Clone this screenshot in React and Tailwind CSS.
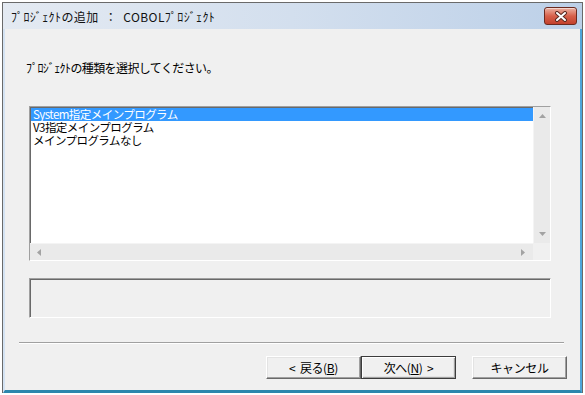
import React from "react";

const font = { fontFamily: '"Noto Sans CJK JP", "Liberation Sans", sans-serif' };

function CloseButton() {
  return (
    <div className="w-[33px] h-[18px] rounded-[3px] border border-[#6b2a20] bg-gradient-to-b from-[#eab0a2] via-[#d7604a] to-[#c3402c] flex items-center justify-center shadow-[inset_0_1px_0_rgba(255,255,255,0.5)]">
      <svg width="14" height="11" viewBox="0 0 14 11">
        <path d="M3 2 L11 9 M11 2 L3 9" stroke="#5a2a22" strokeWidth="4" strokeLinecap="round" />
        <path d="M3 2 L11 9 M11 2 L3 9" stroke="#ffffff" strokeWidth="2" strokeLinecap="round" />
      </svg>
    </div>
  );
}

function Arrow({ dir }) {
  const paths = {
    up: "M0 4 L3.5 0 L7 4 Z",
    down: "M0 0 L7 0 L3.5 4 Z",
    left: "M4 0 L4 7 L0 3.5 Z",
    right: "M0 0 L4 3.5 L0 7 Z",
  };
  const horiz = dir === "left" || dir === "right";
  return (
    <svg width={horiz ? 4 : 7} height={horiz ? 7 : 4} viewBox={horiz ? "0 0 4 7" : "0 0 7 4"}>
      <path d={paths[dir]} fill="#a3a3a3" />
    </svg>
  );
}

function Button({ children, isDefault }) {
  return (
    <div
      className={
        "w-[95px] h-[23px] flex items-center justify-center text-[12px] tracking-[-0.4px] whitespace-pre text-black bg-[#f0f0f0] " +
        (isDefault
          ? "border border-[#3c3c3c] shadow-[inset_1px_1px_0_#ffffff,inset_-1px_-1px_0_#a0a0a0,inset_-2px_-2px_0_#e3e3e3]"
          : "border border-t-white border-l-white border-r-[#696969] border-b-[#696969] shadow-[inset_-1px_-1px_0_#a0a0a0,inset_1px_1px_0_#e3e3e3]")
      }
    >
      {children}
    </div>
  );
}

export default function App() {
  const items = ["System指定メインプログラム", "V3指定メインプログラム", "メインプログラムなし"];

  return (
    <div className="w-[585px] h-[395px] bg-white pl-[2px] pt-[2px]" style={font}>
      <div className="w-[581px] h-[391px] flex flex-col border border-b-0 border-[#6a6a6a]">
        {/* title bar */}
        <div className="h-[26px] flex items-start bg-gradient-to-r from-[#e4eaf2] via-[#d3dfee] to-[#bcd0e8] pl-[8px] pr-[5px]">
          <div className="flex-1 pt-[7px] text-[12px] leading-[14px] tracking-[0.4px] whitespace-pre text-[#111]">
            {"ﾌﾟﾛｼﾞｪｸﾄの追加  ：  COBOLﾌﾟﾛｼﾞｪｸﾄ"}
          </div>
          <div className="pt-[4px]">
            <CloseButton />
          </div>
        </div>

        {/* body */}
        <div className="flex-1 flex flex-col bg-[#f0f0f0] border-l-[2px] border-l-[#d4e3f3] border-r-[2px] border-r-[#4ea6da] border-b-[3px] border-b-[#2c87ad]">
          <div className="mt-[32px] ml-[21px] text-[12px] leading-[14px] tracking-[-0.6px] text-black">
            ﾌﾟﾛｼﾞｪｸﾄの種類を選択してください。
          </div>

          {/* list box */}
          <div className="mt-[31px] ml-[24px] w-[522px] h-[155px] flex flex-col bg-white border border-t-[#a0a0a0] border-l-[#a0a0a0] border-r-white border-b-white shadow-[inset_1px_1px_0_#696969]">
            <div className="flex-1 flex min-h-0">
              <div className="flex-1 pt-[1px] pl-[1px]">
                {items.map((t, i) => (
                  <div
                    key={t}
                    className={
                      "h-[13px] leading-[13px] pl-[2px] text-[11.5px] tracking-[-0.55px] " +
                      (i === 0 ? "bg-[#3399ff] text-white" : "text-black")
                    }
                  >
                    {t}
                  </div>
                ))}
              </div>
              <div className="w-[17px] bg-[#eaeaea] flex flex-col items-center justify-between py-[7px] border-l border-[#f4f4f4]">
                <Arrow dir="up" />
                <Arrow dir="down" />
              </div>
            </div>
            <div className="h-[17px] flex">
              <div className="flex-1 bg-[#eaeaea] flex items-center justify-between pl-[7px] pr-[8px] border-t border-[#f4f4f4]">
                <Arrow dir="left" />
                <Arrow dir="right" />
              </div>
              <div className="w-[17px] bg-[#f0f0f0]" />
            </div>
          </div>

          {/* status box */}
          <div className="mt-[17px] ml-[24px] w-[522px] h-[40px] border border-t-[#a0a0a0] border-l-[#a0a0a0] border-r-white border-b-white shadow-[inset_1px_1px_0_#696969]" />

          {/* separator */}
          <div className="mt-[24px] ml-[14px] w-[545px] h-[2px] border-t border-[#a0a0a0] border-b border-b-white" />

          {/* buttons */}
          <div className="mt-[12px] flex pl-[261px]">
            <Button>
              {"<  戻る("}<span className="underline">B</span>{")"}
            </Button>
            <Button isDefault>
              {"次へ("}<span className="underline">N</span>{")  >"}
            </Button>
            <div className="w-[16px]" />
            <Button>キャンセル</Button>
          </div>
        </div>
      </div>
    </div>
  );
}
